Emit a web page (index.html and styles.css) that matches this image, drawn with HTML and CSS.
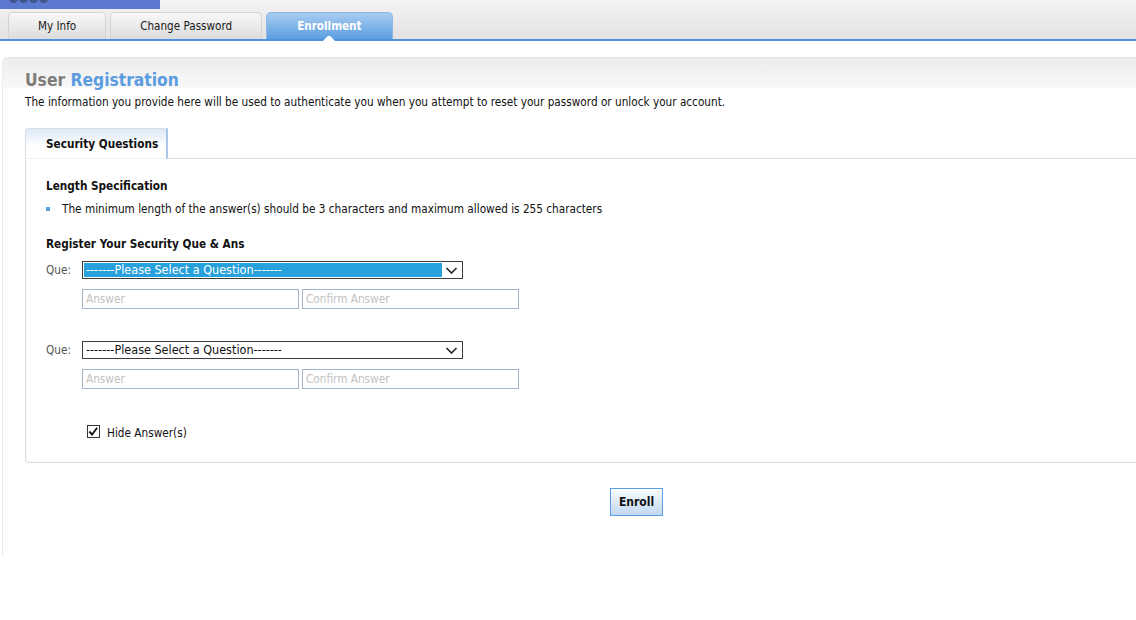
FILE: index.html
```html
<!DOCTYPE html>
<html lang="en">
<head>
  <meta charset="UTF-8" />
  <title>User Registration</title>
  <link rel="stylesheet" href="styles.css">
</head>
<body>

  <div class="topbar">
    <div class="brand"><span></span><span></span><span></span><span></span></div>
    <ul class="tabs">
      <li class="tab">My Info</li>
      <li class="tab">Change Password</li>
      <li class="tab active">Enrollment</li>
    </ul>
  </div>

  <div class="page">
    <div class="panel">
      <h1 class="title"><span class="muted">User</span> Registration</h1>
      <p class="intro">The information you provide here will be used to authenticate you when you attempt to reset your password or unlock your account.</p>

      <div class="box">
        <div class="box-tabs">
          <div class="box-tab">Security Questions</div>
        </div>

        <div class="box-body">
          <h4>Length Specification</h4>
          <ul class="rules">
            <li>The minimum length of the answer(s) should be 3 characters and maximum allowed is 255 characters</li>
          </ul>

          <h4>Register Your Security Que &amp; Ans</h4>

          <div class="qa">
            <div class="que-row">
              <label class="que-label">Que:</label>
              <div class="picker focused">
                <select>
                  <option>-------Please Select a Question-------</option>
                </select>
                <svg class="chev" width="12" height="7" viewBox="0 0 12 7"><path d="M1 1l5 5 5-5" fill="none" stroke="#222" stroke-width="1.6"/></svg>
              </div>
            </div>
            <div class="answers">
              <input type="password" placeholder="Answer">
              <input type="password" placeholder="Confirm Answer">
            </div>
          </div>

          <div class="qa">
            <div class="que-row">
              <label class="que-label">Que:</label>
              <div class="picker">
                <select>
                  <option>-------Please Select a Question-------</option>
                </select>
                <svg class="chev" width="12" height="7" viewBox="0 0 12 7"><path d="M1 1l5 5 5-5" fill="none" stroke="#222" stroke-width="1.6"/></svg>
              </div>
            </div>
            <div class="answers">
              <input type="password" placeholder="Answer">
              <input type="password" placeholder="Confirm Answer">
            </div>
          </div>

          <label class="hide">
            <span class="check"><svg width="13" height="13" viewBox="0 0 13 13"><path d="M2.5 6.5l3 3.2L11 2.5" fill="none" stroke="#111" stroke-width="2"/></svg></span>
            Hide Answer(s)
          </label>
        </div>
      </div>

      <div class="actions">
        <button class="enroll">Enroll</button>
      </div>
    </div>
  </div>

</body>
</html>
```

FILE: styles.css
```css
html, body {
  margin: 0;
  overflow: hidden;
  background: #fff;
  font-family: "DejaVu Sans Condensed", "DejaVu Sans", sans-serif;
  font-size: 11.7px;
  color: #111;
}

/* header strip with the main tabs */
.topbar {
  height: 39px;
  border-bottom: 2px solid #4b93dc;
  background: linear-gradient(#f4f2f2, #e4e2e2);
}
.brand {
  width: 151px;
  height: 9px;
  padding-left: 9px;
  background: #5b79cf;
  display: flex;
  gap: 1px;
  overflow: hidden;
}
.brand span {
  width: 9px;
  height: 9px;
  margin-top: -6px;
  border-radius: 50%;
  background: #42558c;
}
.tabs {
  display: flex;
  gap: 4px;
  margin: 3px 0 0 8px;
  padding: 0;
  list-style: none;
}
.tab {
  position: relative;
  height: 27px;
  box-sizing: border-box;
  padding: 0 29px;
  border: 1px solid #d4d2d2;
  border-bottom: none;
  border-radius: 5px 5px 0 0;
  background: linear-gradient(#f8f8f8, #dcdcdc);
  font-size: 11.6px;
  color: #1a1a1a;
  display: flex;
  align-items: center;
}
.tab.active {
  padding: 0 30px;
  border-color: #8cb8e8;
  background: linear-gradient(#a9cdf1, #5b9de0);
  color: #fff;
  font-weight: bold;
}
.tab.active::after {
  content: "";
  position: absolute;
  left: 50%;
  bottom: -8px;
  width: 10px;
  height: 10px;
  margin-left: -5px;
  border-radius: 2px;
  background: #fff;
  transform: rotate(45deg);
}

/* page body */
.page {
  width: 1248px;
}
.panel {
  margin: 16px 0 0 2px;
  padding: 11px 0 40px 22px;
  border-top: 1px solid #e4e4e4;
  border-left: 1px solid #ebebeb;
  border-radius: 6px 0 0 0;
  background: linear-gradient(#ededed, #f8f8f8 30px, #fff 30px);
}
.title {
  margin: 0;
  font-size: 17.3px;
  line-height: 22px;
  color: #5b9be0;
}
.title .muted {
  color: #807c79;
}
.intro {
  margin: 4px 0 0;
  line-height: 14px;
}

/* security questions box */
.box {
  margin-top: 19px;
}
.box-tabs {
  display: flex;
  height: 31px;
}
.box-tab {
  box-sizing: border-box;
  height: 31px;
  padding: 0 8px 0 20px;
  border: 1px solid #d6dde6;
  border-right: 2px solid #a9c5e8;
  border-bottom: 1px solid #eef2f6;
  border-radius: 4px 0 0 0;
  background: linear-gradient(#dce8f6, #fff 60%);
  font-weight: bold;
  display: flex;
  align-items: center;
}
.box-tabs::after {
  content: "";
  flex: 1;
  border-bottom: 1px solid #dcdcdc;
}
.box-body {
  padding: 20px 0 22px 20px;
  border-left: 1px solid #d9d9d9;
  border-bottom: 1px solid #d9d9d9;
  border-radius: 0 0 0 4px;
}
.box-body h4 {
  margin: 0;
  font-size: 11.7px;
  line-height: 14px;
}
.rules {
  margin: 9px 0 21px;
  padding: 0;
  list-style: none;
}
.rules li {
  display: flex;
  align-items: center;
  line-height: 14px;
}
.rules li::before {
  content: "";
  width: 4px;
  height: 4px;
  margin-right: 12px;
  background: #5aa0e2;
}

.qa {
  margin-top: 10px;
}
.qa + .qa {
  margin-top: 32px;
}
.que-row {
  display: flex;
  align-items: center;
}
.que-label {
  width: 36px;
  color: #555;
}
.picker {
  width: 381px;
  height: 18px;
  box-sizing: border-box;
  padding: 1px;
  border: 1px solid #3c3c3c;
  display: flex;
  align-items: center;
  background: #fff;
}
.picker select {
  flex: 1;
  height: 14px;
  margin: 0;
  padding: 0 2px;
  border: none;
  outline: none;
  appearance: none;
  background: transparent;
  font: inherit;
  font-size: 12.5px;
  line-height: 14px;
  color: #111;
}
.picker.focused select {
  background: #27a0db;
  color: #fff;
}
.chev {
  width: 19px;
  flex: none;
}
.answers {
  display: flex;
  gap: 3px;
  margin: 10px 0 0 36px;
}
.answers input {
  width: 217px;
  height: 20px;
  box-sizing: border-box;
  margin: 0;
  padding: 0 3px;
  border: 1px solid #a3b4c8;
  font: inherit;
  outline: none;
}
.answers input::placeholder {
  color: #c2c2c2;
}

.hide {
  display: flex;
  align-items: center;
  gap: 7px;
  margin: 37px 0 0 41px;
  height: 14px;
}
.check {
  width: 13px;
  height: 13px;
  box-sizing: border-box;
  border: 1px solid #333;
  display: flex;
  position: relative;
  top: -2px;
}
.check svg {
  margin: -1px 0 0 -1px;
}

.actions {
  display: flex;
  justify-content: center;
  margin-top: 25px;
}
.enroll {
  width: 53px;
  height: 28px;
  border: 1px solid #5b9fe3;
  background: linear-gradient(#fbfdff, #dce9f8 50%, #c3d8f2);
  font: inherit;
  font-size: 12px;
  font-weight: bold;
  color: #111;
}
```
